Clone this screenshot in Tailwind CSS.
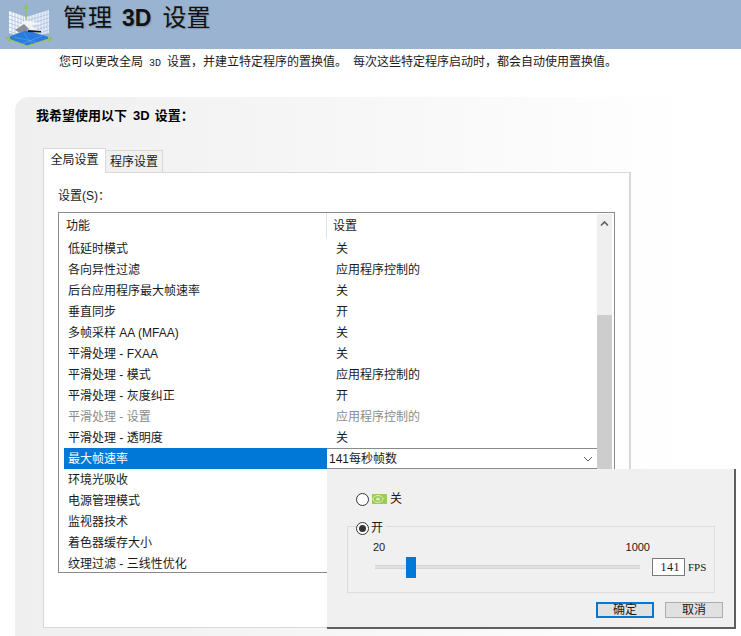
<!DOCTYPE html>
<html lang="zh-CN">
<head>
    <meta charset="UTF-8">
    <title>管理 3D 设置</title>
    <script src="https://cdn.jsdelivr.net/npm/@tailwindcss/browser@4"></script>
</head>
<body class="bg-white w-[741px] h-[636px] overflow-hidden text-[#1a1a1a] font-['Liberation_Sans','Noto_Sans_CJK_SC',sans-serif]">
    <!-- Header -->
    <div class="flex items-start h-[49px] bg-[#9ab3d0]">
        <svg class="w-[55px] h-[49px] shrink-0" viewBox="0 0 55 49">
            <path d="M9 11 L26 17 L26 38 L9 33 Z" fill="#f4f7fc"/>
            <path d="M26 17 L49 10 L49 33 L26 38 Z" fill="#e8eef8"/>
            <path d="M12 12V34 M15 13V35 M18 14V36 M21 15V37 M23.500 16V37 M29 16V37 M32 15V36.500 M35 14V36 M38 13.500V35.500 M41 12.500V35 M44 12V34.500 M47 11V34 M9 15L26 21L49 14 M9 19L26 25L49 18 M9 23L26 29L49 22 M9 27L26 33L49 26 M9 31L26 37L49 30" stroke="#a8bcdd" stroke-width="0.7" fill="none"/>
            <path d="M6 38 L26 30 L52 38 L27 46 Z" fill="#2a7be0"/>
            <path d="M14 37 L36 42 M22 44 L42 36 M24 33 L32 44" stroke="#6aa8f0" stroke-width="0.5"/>
            <path d="M6 38 L27 46 L52 38" stroke="#9cc45a" stroke-width="1.200" fill="none"/>
            <path d="M26 5 V27" stroke="#8fc06a" stroke-width="1.500"/>
            <path d="M26 3 L29 9 H23 Z" fill="#8fc06a"/>
            <path d="M5 39 L10 36 L10 42 Z M53 39 L48 36 L48 42 Z" fill="#8fc06a"/>
            <path d="M18 28 L25 20 L42 24 L31 25 L40 32 L27 28 Z" fill="#f1f3f5"/>
            <path d="M15 30 L24 24 L29 29 L20 33 Z" fill="#8b8f94"/>
            <path d="M28 30 L41 31 L41 32.500 L28 32 Z" fill="#1a1a1a"/>
        </svg>
        <h1 class="ml-[8px] mt-[6px] text-[24px] leading-[24px] font-normal whitespace-nowrap text-[#111] [text-shadow:1px_1px_1px_#7f93ad]"><span class="tracking-[1px]">管理</span><span class="ml-[9px] font-bold text-[23px]">3D</span><span class="ml-[11px]">设置</span></h1>
    </div>
    <p class="ml-[59px] mt-[5px] h-[16px] text-[12px] leading-[16px] whitespace-nowrap">您可以更改全局<span class="mx-[6px] text-[10px] font-['Liberation_Mono',monospace]">3D</span>设置，并建立特定程序的置换值。<span class="ml-[6px]">每次这些特定程序启动时，都会自动使用置换值。</span></p>

    <!-- Panel with fading gray background -->
    <div class="relative ml-[15px] mt-[27px] h-[539px] rounded-tl-[14px] bg-gradient-to-r from-[#efefef] to-white to-[94%] pl-[21px] pt-[11px]">
        <h2 class="h-[16px] text-[13px] leading-[16px] font-bold text-black whitespace-nowrap">我希望使用以下<span class="ml-[6px] mr-[5px]">3D</span>设置：</h2>

        <div class="flex items-end h-[25px] mt-[23px] ml-[7px] text-[12px]">
            <div class="relative z-10 flex items-center justify-center w-[63px] h-[25px] pb-[2px] -mb-px bg-white border border-b-0 border-[#d9d9d9]">全局设置</div>
            <div class="flex items-center justify-center w-[57px] h-[22px] bg-[#f0f0f0] border border-l-0 border-b-0 border-[#d9d9d9]">程序设置</div>
        </div>

        <!-- Tab page -->
        <div class="ml-[7px] w-[588px] h-[456px] bg-white border border-[#d9d9d9] border-r-2 px-[14px] pt-[15px]">
            <div class="h-[15px] text-[12px] leading-[16px]">设置(S)：</div>

            <!-- Settings list -->
            <div class="flex mt-[9px] w-[557px] h-[361px] border border-[#8a8a8a] text-[12px]">
                <div class="flex-1 min-w-0 overflow-hidden">
                    <div class="flex h-[25px] items-center">
                        <div class="w-[268px] pl-[7px] border-r border-[#e3e3e3] h-full flex items-center">功能</div>
                        <div class="pl-[6px]">设置</div>
                    </div>
                    <div class="grid grid-cols-[263px_1fr] auto-rows-[21px] items-center pl-[5px] [&>div]:h-[21px] [&>div]:pt-[2px] [&>div]:leading-[19px] [&>div]:whitespace-nowrap">
                        <div class="pl-[4px]">低延时模式</div><div class="pl-[9px]">关</div>
                        <div class="pl-[4px]">各向异性过滤</div><div class="pl-[9px]">应用程序控制的</div>
                        <div class="pl-[4px]">后台应用程序最大帧速率</div><div class="pl-[9px]">关</div>
                        <div class="pl-[4px]">垂直同步</div><div class="pl-[9px]">开</div>
                        <div class="pl-[4px]">多帧采样 AA (MFAA)</div><div class="pl-[9px]">关</div>
                        <div class="pl-[4px]">平滑处理 - FXAA</div><div class="pl-[9px]">关</div>
                        <div class="pl-[4px]">平滑处理 - 模式</div><div class="pl-[9px]">应用程序控制的</div>
                        <div class="pl-[4px]">平滑处理 - 灰度纠正</div><div class="pl-[9px]">开</div>
                        <div class="pl-[4px] text-[#8c8c8c]">平滑处理 - 设置</div><div class="pl-[9px] text-[#8c8c8c]">应用程序控制的</div>
                        <div class="pl-[4px]">平滑处理 - 透明度</div><div class="pl-[9px]">关</div>
                        <div class="pl-[4px] bg-[#0078d7] text-white">最大帧速率</div><div></div>
                        <div class="pl-[4px]">环境光吸收</div><div></div>
                        <div class="pl-[4px]">电源管理模式</div><div></div>
                        <div class="pl-[4px]">监视器技术</div><div></div>
                        <div class="pl-[4px]">着色器缓存大小</div><div></div>
                        <div class="pl-[4px]">纹理过滤 - 三线性优化</div><div></div>
                    </div>
                </div>
                <!-- Scrollbar -->
                <div class="w-[15px] mr-[2px] mt-px h-[calc(100%-1px)] bg-[#efefef] shrink-0 flex flex-col items-center">
                    <svg class="mt-[6px] w-[9px] h-[7px] shrink-0" viewBox="0 0 9 7"><path d="M1 5.500 L4.500 2 L8 5.500" fill="none" stroke="#606060" stroke-width="1.600"/></svg>
                    <div class="mt-[88px] w-full flex-1 bg-[#cdcdcd]"></div>
                </div>
            </div>
        </div>
    </div>

    <!-- Dropdown value and popup over the list -->
    <div class="absolute left-[327px] top-[448px] flex items-center justify-between w-[270px] h-[21px] bg-white border-y border-[#8a8a8a] pl-[2px] pr-[4px] text-[12px]">
        <span>141每秒帧数</span>
        <svg class="w-[10px] h-[6px]" viewBox="0 0 10 6"><path d="M1 1 L5 5 L9 1" fill="none" stroke="#606060" stroke-width="1"/></svg>
    </div>
    <div class="absolute left-[327px] top-[469px] w-[409px] h-[160px] bg-[#5f5f5f] pr-[2px] pb-[2px] text-[12px]">
        <div class="h-full bg-[#f0f0f0] flow-root">
            <div class="flex items-center h-[16px] mt-[22px] ml-[29px] gap-[3px]">
                <span class="w-[13px] h-[13px] rounded-full bg-white border border-[#333]"></span>
                <svg class="w-[15px] h-[10px]" viewBox="0 0 15 10"><rect width="15" height="10" fill="#9ccb5a"/><ellipse cx="6" cy="5" rx="5" ry="3.500" fill="none" stroke="#dcefb8" stroke-width="1"/><ellipse cx="6" cy="5" rx="2" ry="1.500" fill="#dcefb8"/></svg>
                <span>关</span>
            </div>
            <fieldset class="relative mt-[19px] ml-[20px] w-[368px] h-[67px] border border-[#dcdcdc] pt-[13px]">
                <div class="absolute left-[8px] -top-[7px] flex items-center gap-[2px] pr-[3px] h-[16px] bg-[#f0f0f0]">
                    <span class="flex items-center justify-center w-[13px] h-[13px] rounded-full bg-white border border-[#333]"><span class="w-[7px] h-[7px] rounded-full bg-[#333]"></span></span>
                    <span>开</span>
                </div>
                <div class="flex justify-between w-[277px] ml-[25px] text-[11px] leading-[14px] h-[14px]"><span>20</span><span>1000</span></div>
                <div class="flex items-center mt-[4px] ml-[27px]">
                    <div class="relative w-[265px] h-[4px] bg-[#e0e0e0] border-y border-[#d4d4d4]">
                        <div class="absolute left-[31px] -top-[9px] w-[10px] h-[21px] bg-[#0078d7]"></div>
                    </div>
                    <div class="ml-[12px] w-[33px] h-[18px] bg-white border border-[#7a7a7a] text-right pr-[4px] leading-[16px] font-['Liberation_Serif','Noto_Sans_CJK_SC',serif] tracking-[0.5px]">141</div>
                    <span class="ml-[3px] text-[11px] font-['Liberation_Serif',serif]">FPS</span>
                </div>
            </fieldset>
            <div class="flex justify-end gap-[11px] mt-[9px] mr-[11px]">
                <div class="flex items-center justify-center w-[58px] h-[16px] bg-[#e1e1e1] border-2 border-[#0078d7]">确定</div>
                <div class="flex items-center justify-center w-[58px] h-[16px] bg-[#e1e1e1] border border-[#adadad]">取消</div>
            </div>
        </div>
    </div>
</body>
</html>
